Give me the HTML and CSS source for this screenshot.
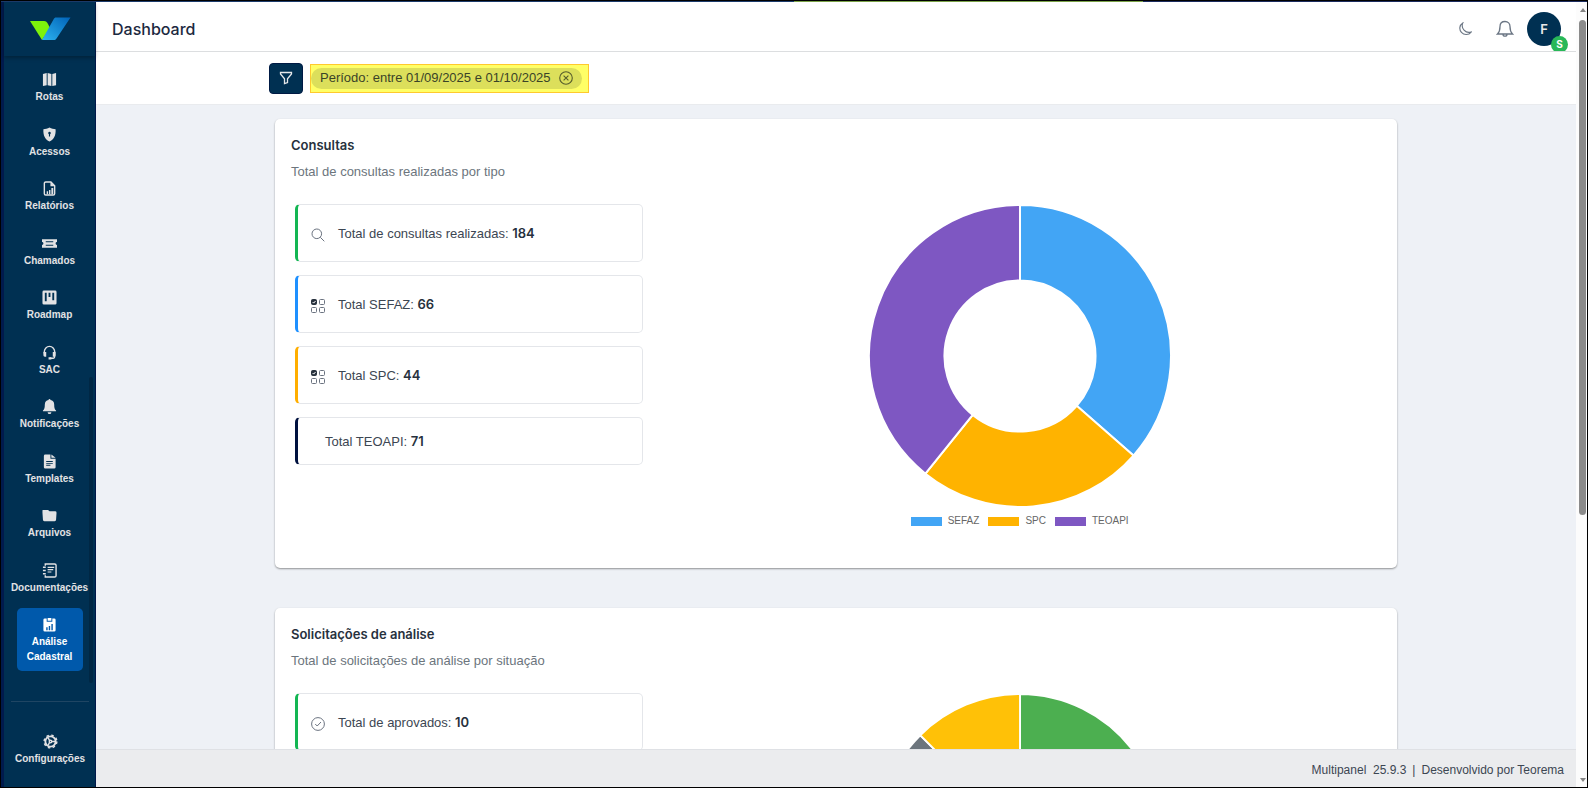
FILE: index.html
```html
<!DOCTYPE html>
<html lang="pt-BR">
<head>
    <meta charset="UTF-8">
    <meta name="viewport" content="width=device-width, initial-scale=1.0">
    <title>Dashboard</title>
    <link rel="stylesheet" href="styles.css">
</head>
<body>
    <div class="app">
        <aside class="sidebar">
            <div class="logo">
                <svg width="42" height="24" viewBox="0 0 42 24">
                    <defs>
                        <linearGradient id="logo-blue" x1="1" y1="0" x2="0" y2="1">
                            <stop offset="0" stop-color="#0062b8"/>
                            <stop offset="1" stop-color="#2db4f0"/>
                        </linearGradient>
                    </defs>
                    <path d="M1 4h14c2 0 3 1 4 3l2 4-8 12z" fill="#7ef20c"/>
                    <path d="M27 .500h14.500L27.500 21.500c-.8 1.200-1.500 1.500-2.500 1.500H13L24.500 2.500c.8-1.400 1.500-2 2.500-2z" fill="url(#logo-blue)"/>
                </svg>
            </div>
            <nav class="nav">
                <a class="nav-item" href="#"><svg class="nav-icon" viewBox="0 0 16 16"><path d="M1 2l4-1v13l-4 1zM6 1l4 1v13l-4-1zM11 2l4-1v13l-4 1z"/></svg>Rotas</a>
                <a class="nav-item" href="#"><svg class="nav-icon" viewBox="0 0 16 16"><path fill-rule="evenodd" d="M8 .5c2 1 4.500 1.600 6.500 1.800C15 9 12.500 13.500 8 15.500 3.500 13.500 1 9 1.500 2.300 3.500 2.100 6 1.500 8 .5zM8 5a1.500 1.500 0 0 0-.6 2.800V10h1.200V7.800A1.500 1.500 0 0 0 8 5z"/></svg>Acessos</a>
                <a class="nav-item" href="#"><svg class="nav-icon" viewBox="0 0 16 16"><path class="line" d="M9.500 1H4a1.500 1.500 0 0 0-1.500 1.500v11A1.500 1.500 0 0 0 4 15h8a1.500 1.500 0 0 0 1.500-1.500V5z"/><path d="M9 1l5 4.500H9zM5 11h1.500v3H5zM7.500 9.500H9V14H7.500zM10 7.500h2V14h-2z"/></svg>Relatórios</a>
                <a class="nav-item" href="#"><svg class="nav-icon" viewBox="0 0 16 16"><path fill-rule="evenodd" d="M0 3.500h16v3a1.500 1.500 0 0 0 0 3v3H0v-3a1.500 1.500 0 0 0 0-3zM4 5.500v1.200h8V5.500zM4 9.300v1.200h8V9.300z"/></svg>Chamados</a>
                <a class="nav-item" href="#"><svg class="nav-icon" viewBox="0 0 16 16"><path fill-rule="evenodd" d="M2 .5h12A1.500 1.500 0 0 1 15.500 2v12a1.500 1.500 0 0 1-1.500 1.500H2A1.500 1.500 0 0 1 .5 14V2A1.500 1.500 0 0 1 2 .5zM3 3v9h2V3zM7 3v4.500h2V3zM11 3v8h2V3z"/></svg>Roadmap</a>
                <a class="nav-item" href="#"><svg class="nav-icon" viewBox="0 0 16 16"><path class="line" d="M2.500 9V7a5.500 5.500 0 0 1 11 0v5.500A1.800 1.800 0 0 1 12 14.200H8.500"/><path d="M1.500 7.500h3v5H3A1.500 1.500 0 0 1 1.500 11zM11.500 7.500h3V11a1.500 1.500 0 0 1-1.500 1.500h-1.500zM7 13h3v2.500H7z"/></svg>SAC</a>
                <a class="nav-item" href="#"><svg class="nav-icon" viewBox="0 0 16 16"><path d="M8 0a1 1 0 0 1 1 1.100A5 5 0 0 1 13 6c0 3.500.7 5 2 6.300V13H1v-.7C2.300 11 3 9.500 3 6a5 5 0 0 1 4-4.900A1 1 0 0 1 8 0zM6 14h4a2 2 0 0 1-4 0z"/></svg>Notificações</a>
                <a class="nav-item" href="#"><svg class="nav-icon" viewBox="0 0 16 16"><path fill-rule="evenodd" d="M3.500.5H9V5h5.500v9a1.500 1.500 0 0 1-1.500 1.500H3.500A1.500 1.500 0 0 1 2 14V2A1.500 1.500 0 0 1 3.500.5zM4.500 7.500v1h7v-1zM4.500 9.500v1h7v-1zM4.500 11.500v1H9v-1zM10 .5L14.500 4H10z"/></svg>Templates</a>
                <a class="nav-item" href="#"><svg class="nav-icon" viewBox="0 0 16 16"><path d="M1 2h5.500L8 3.500h6A1.500 1.500 0 0 1 15.500 5L15 12.500a1.500 1.500 0 0 1-1.500 1.500h-11A1.500 1.500 0 0 1 1 12.500L.5 5V2.500z"/></svg>Arquivos</a>
                <a class="nav-item" href="#"><svg class="nav-icon" viewBox="0 0 16 16"><path class="line" d="M3.500 3V1h10A1.500 1.500 0 0 1 15 2.500v11a1.500 1.500 0 0 1-1.500 1.500h-10v-2M1 4.500h3M1 8h3M1 11.500h3"/><path d="M6 4h7v1.200H6zM6 6.500h6v1.200H6zM6 9h4v1.200H6z"/></svg>Documentações</a>
                <a class="nav-item active" href="#"><svg class="nav-icon" viewBox="0 0 16 16"><path fill-rule="evenodd" d="M6 1h4v3H6zM5 1.500H3A1.500 1.500 0 0 0 1.500 3v11A1.500 1.500 0 0 0 3 15.500h10a1.500 1.500 0 0 0 1.500-1.500V3A1.500 1.500 0 0 0 13 1.500h-2V5H5zM4.500 11H6v3H4.500zM7.200 9.500h1.500V14H7.200zM10 7.500h1.500V14H10z"/></svg>Análise Cadastral</a>
            </nav>
            <div class="nav-scroll"></div>
            <div class="nav-bottom">
                <a class="nav-item" href="#"><svg class="nav-icon" viewBox="0 0 16 16"><circle cx="8" cy="8" r="5.500" class="line thick"/><circle cx="8" cy="8" r="6.800" class="line teeth"/><circle cx="8" cy="8" r="1.300" class="line"/><path class="line" d="M9 8h4M7 7L5.500 4M7 9l-1.500 3"/></svg>Configurações</a>
            </div>
        </aside>

        <div class="main">
            <header class="topbar">
                <h1 class="page-title">Dashboard</h1>
                <div class="top-actions">
                    <button class="icon-btn" aria-label="Tema escuro"><svg width="14" height="14" viewBox="0 0 16 16"><path d="M5.500 1a7.200 7.200 0 1 0 9.500 10.500A7.800 7.800 0 0 1 5.500 1z"/></svg></button>
                    <button class="icon-btn" aria-label="Notificações"><svg width="18" height="18" viewBox="0 0 18 18"><path d="M9 1.500c-3 0-5 2-5 5 0 4-1 6-2.500 7.500h15C15 12.500 14 10.500 14 6.500c0-3-2-5-5-5zM7 14.200a2 2 0 0 0 4 0"/></svg></button>
                    <button class="avatar">F<span class="badge">S</span></button>
                </div>
            </header>

            <div class="filterbar">
                <div class="container filter-row">
                    <button class="filter-btn" aria-label="Filtrar"><svg width="14" height="14" viewBox="0 0 14 14"><path d="M1.500 1.500h11v1.500L8.500 7.800v3.700l-3 1V7.800L1.500 3z"/></svg></button>
                    <div class="highlight">
                        <div class="chip">
                            <span>Período: entre 01/09/2025 e 01/10/2025</span>
                            <button class="chip-close" aria-label="Remover"><svg width="14" height="14" viewBox="0 0 14 14"><circle cx="7" cy="7" r="6.300"/><path d="M4.600 4.600l4.800 4.800M9.400 4.600L4.600 9.400"/></svg></button>
                        </div>
                    </div>
                </div>
            </div>

            <main class="content">
                <div class="container cards">
                    <section class="card">
                        <h2 class="card-title">Consultas</h2>
                        <p class="card-subtitle">Total de consultas realizadas por tipo</p>
                        <div class="card-body">
                            <div class="stats">
                                <div class="stat green"><svg class="stat-icon" viewBox="0 0 14 14"><circle cx="5.800" cy="5.800" r="4.800"/><path d="M9.300 9.300l4 4"/></svg><span>Total de consultas realizadas: <b>184</b></span></div>
                                <div class="stat blue"><svg class="stat-icon" viewBox="0 0 14 14"><rect class="solid" x=".5" y=".5" width="5" height="5" rx="1"/><path class="tick" d="M1.600 3l1.100 1.100L4.500 2"/><rect x="8.500" y=".5" width="5" height="5" rx="1"/><rect x=".5" y="8.500" width="5" height="5" rx="1"/><rect x="8.500" y="8.500" width="5" height="5" rx="1"/></svg><span>Total SEFAZ: <b>66</b></span></div>
                                <div class="stat amber"><svg class="stat-icon" viewBox="0 0 14 14"><rect class="solid" x=".5" y=".5" width="5" height="5" rx="1"/><path class="tick" d="M1.600 3l1.100 1.100L4.500 2"/><rect x="8.500" y=".5" width="5" height="5" rx="1"/><rect x=".5" y="8.500" width="5" height="5" rx="1"/><rect x="8.500" y="8.500" width="5" height="5" rx="1"/></svg><span>Total SPC: <b>44</b></span></div>
                                <div class="stat navy compact"><span>Total TEOAPI: <b>71</b></span></div>
                            </div>
                            <div class="chart">
                                <svg class="donut" viewBox="-151 -151 302 302" data-slices="66:#42a5f5,44:#ffb300,71:#7e57c2"></svg>
                                <ul class="legend">
                                    <li><i class="swatch sefaz"></i>SEFAZ</li>
                                    <li><i class="swatch spc"></i>SPC</li>
                                    <li><i class="swatch teoapi"></i>TEOAPI</li>
                                </ul>
                            </div>
                        </div>
                    </section>

                    <section class="card">
                        <h2 class="card-title">Solicitações de análise</h2>
                        <p class="card-subtitle">Total de solicitações de análise por situação</p>
                        <div class="card-body">
                            <div class="stats">
                                <div class="stat green"><svg class="stat-icon" viewBox="0 0 14 14"><circle cx="7" cy="7" r="6.400"/><path d="M4.200 7l2 2 3.800-4"/></svg><span>Total de aprovados: <b>10</b></span></div>
                            </div>
                            <div class="chart">
                                <svg class="donut small" viewBox="-151 -151 302 302" data-slices="10:#4caf50,4:#6c757d,2:#ffc107"></svg>
                            </div>
                        </div>
                    </section>
                </div>
            </main>

            <footer class="footer">
                <span>Multipanel&nbsp; 25.9.3</span>
                <span>|</span>
                <span>Desenvolvido por Teorema</span>
            </footer>
        </div>

        <div class="scrollbar">
            <div class="arrow up"></div>
            <div class="track"><div class="thumb"></div></div>
            <div class="arrow down"></div>
        </div>
    </div>

    <script src="script.js"></script>
</body>
</html>
```
FILE: styles.css
```css
* { box-sizing: border-box; }
body { margin: 0; font-family: "Liberation Sans", Arial, sans-serif; font-size: 13px; line-height: 20px; color: #3c4652; background: #fff; }
a { color: inherit; text-decoration: none; }
button { font-family: inherit; padding: 0; border: none; background: none; cursor: pointer; }
svg { display: block; }
h1, h2, p, ul { margin: 0; padding: 0; }

.app { display: flex; height: 100vh; padding-top: 1px; border: 1px solid #000; overflow: hidden; background: linear-gradient(to right, #1c3c6c 50%, #7ba348 50%, #7ba348 72%, #1c2c60 72%); }

/* sidebar */
.sidebar { position: relative; flex: 0 0 95px; min-width: 0; display: flex; flex-direction: column; background: #003052; border-left: 3px solid #001a4d; border-right: 1px solid #00184a; color: #e2e2e4; }
.logo { height: 54px; display: flex; align-items: center; justify-content: center; box-shadow: 0 2px 4px rgba(0,0,0,0.3); }
.nav { flex: 1; display: flex; flex-direction: column; justify-content: space-between; align-items: center; margin-top: 7px; }
.nav-item { display: flex; flex-direction: column; align-items: center; gap: 2px; padding: 9px 4px 7px; font-size: 10px; font-weight: 700; line-height: 15px; text-align: center; border-radius: 5px; }
.nav-item.active { width: 66px; background: #0059ab; color: #fff; }
.nav-icon { width: 15px; height: 15px; fill: currentColor; }
.nav-icon .line { fill: none; stroke: currentColor; stroke-width: 1.5; }
.nav-icon .thick { stroke-width: 2; }
.nav-icon .teeth { stroke-dasharray: 2.67 2.67; }
.nav-scroll { position: absolute; right: 2px; top: 375px; height: 306px; width: 4px; border-radius: 2px; background: #002744; }
.nav-bottom { margin: 30px 6px 14px 7px; padding-top: 23px; border-top: 1px solid #1f4563; display: flex; justify-content: center; }

/* top bar */
.main { flex: 1; min-width: 0; display: flex; flex-direction: column; background: #fff; }
.topbar { height: 50px; flex: none; display: flex; align-items: center; justify-content: space-between; padding: 4px 15px 0 16px; border-bottom: 1px solid #dcdee0; overflow: hidden; }
.page-title { font-family: Inter, sans-serif; font-size: 16px; font-weight: 500; line-height: 24px; color: #1c2940; }
.top-actions { display: flex; align-items: center; gap: 4px; }
.icon-btn { width: 36px; height: 26px; display: flex; align-items: center; justify-content: center; }
.icon-btn svg { fill: none; stroke: #6b7684; stroke-width: 1.3; }
.avatar { position: relative; width: 34px; height: 34px; border-radius: 50%; background: #003052; color: #e8e8e8; font-family: Inter, sans-serif; font-size: 13px; font-weight: 600; }
.badge { position: absolute; right: -7px; bottom: -7px; width: 17px; height: 17px; border-radius: 50%; background: #28b858; color: #fff; font-size: 10px; font-weight: 700; line-height: 17px; }

/* filter */
.container { width: 100%; max-width: 1134px; margin: 0 auto; }
.filterbar { height: 53px; flex: none; display: flex; align-items: center; border-bottom: 1px solid #e9ebee; }
.filter-row { display: flex; align-items: center; gap: 7px; }
.filter-btn { width: 34px; height: 31px; display: flex; align-items: center; justify-content: center; border-radius: 4px; background: #003052; border: 1px solid #001a44; }
.filter-btn svg { fill: none; stroke: #e6e8ea; stroke-width: 1.3; }
.highlight { padding: 3px 6px 3px 0; background: #ffff66; border: 1px solid #ffc92e; }
.chip { display: flex; align-items: center; gap: 8px; height: 21px; padding: 0 9px; border-radius: 11px; background: #dcdf5b; color: #3a4328; }
.chip-close svg { fill: none; stroke: #565c2c; stroke-width: 1.1; }

/* cards */
.content { flex: 1; min-height: 0; overflow: hidden; background: #eef1f6; padding-top: 14px; }
.cards { padding: 0 6px; display: flex; flex-direction: column; gap: 40px; }
.card { min-height: 449px; padding: 16px; background: #fff; border-radius: 5px; box-shadow: 0 1px 2px rgba(0,0,0,0.4); }
.card-title { font-family: Inter, sans-serif; font-size: 13px; font-weight: 600; line-height: 20px; color: #27313d; }
.card-subtitle { margin-top: 7px; color: #6c757d; }
.card-body { display: grid; grid-template-columns: 1fr 2fr; gap: 6px; margin-top: 22px; }
.stats { display: flex; flex-direction: column; gap: 13px; padding: 0 9px 0 4px; }
.stat { display: flex; align-items: center; gap: 13px; height: 58px; padding: 0 13px; border: 1px solid #e4e6ea; border-left-width: 3px; border-radius: 5px; }
.stat.compact { height: 48px; padding-left: 27px; }
.stat b { font-family: Inter, sans-serif; color: #27313d; font-weight: 600; }
.stat.green { border-left-color: #13b653; }
.stat.blue { border-left-color: #1e90ff; }
.stat.amber { border-left-color: #ffae00; }
.stat.navy { border-left-color: #00113f; }
.stat-icon { width: 14px; height: 14px; margin-top: 4px; fill: none; stroke: #6b7380; stroke-width: 1; }
.stat-icon .solid { fill: #27313d; stroke: #27313d; }
.stat-icon .tick { stroke: #fff; }

/* chart */
.chart { display: flex; flex-direction: column; align-items: center; }
.donut { width: 304px; height: 304px; }
.donut.small { width: 284px; height: 284px; }
.legend { display: flex; gap: 9px; margin-top: 5px; list-style: none; font-size: 10px; line-height: 16px; color: #666; }
.legend li { display: flex; align-items: center; gap: 6px; }
.swatch { width: 31px; height: 9px; }
.swatch.sefaz { background: #42a5f5; }
.swatch.spc { background: #ffb300; }
.swatch.teoapi { background: #7e57c2; }

/* footer */
.footer { height: 38px; flex: none; display: flex; align-items: center; justify-content: flex-end; gap: 6px; padding: 2px 12px 0 0; background: #ebecee; border-top: 1px solid #dfe1e5; font-size: 12px; }

/* scrollbar */
.scrollbar { flex: 0 0 11px; display: flex; flex-direction: column; align-items: center; padding: 6px 0 5px 2px; background: #fcfcfc; }
.track { flex: 1; width: 7px; margin: 8px 0; }
.thumb { width: 7px; height: 66%; border-radius: 4px; background: #8b8b8b; }
.arrow { border: 3px solid transparent; border-top-width: 0; border-bottom: 4px solid #858585; }
.arrow.down { border-bottom: 0; border-top: 4px solid #858585; }
```
FILE: script.js
```js
const OUTER = 150;
const INNER = 75;

function point(radius, angle) {
    return (radius * Math.sin(angle)).toFixed(2) + ' ' + (-radius * Math.cos(angle)).toFixed(2);
}

// Draw each donut from its data-slices ("value:color,value:color")
document.querySelectorAll('.donut').forEach(svg => {
    const slices = svg.dataset.slices.split(',').map(s => s.split(':'));
    const total = slices.reduce((sum, s) => sum + Number(s[0]), 0);
    let start = 0;

    slices.forEach(([value, color]) => {
        const end = start + (value / total) * Math.PI * 2;
        const large = end - start > Math.PI ? 1 : 0;
        const path = document.createElementNS('http://www.w3.org/2000/svg', 'path');
        path.setAttribute('d', `M${point(OUTER, start)} A${OUTER} ${OUTER} 0 ${large} 1 ${point(OUTER, end)} L${point(INNER, end)} A${INNER} ${INNER} 0 ${large} 0 ${point(INNER, start)} Z`);
        path.setAttribute('fill', color);
        path.setAttribute('stroke', '#fff');
        path.setAttribute('stroke-width', '2');
        svg.appendChild(path);
        start = end;
    });
});
```
